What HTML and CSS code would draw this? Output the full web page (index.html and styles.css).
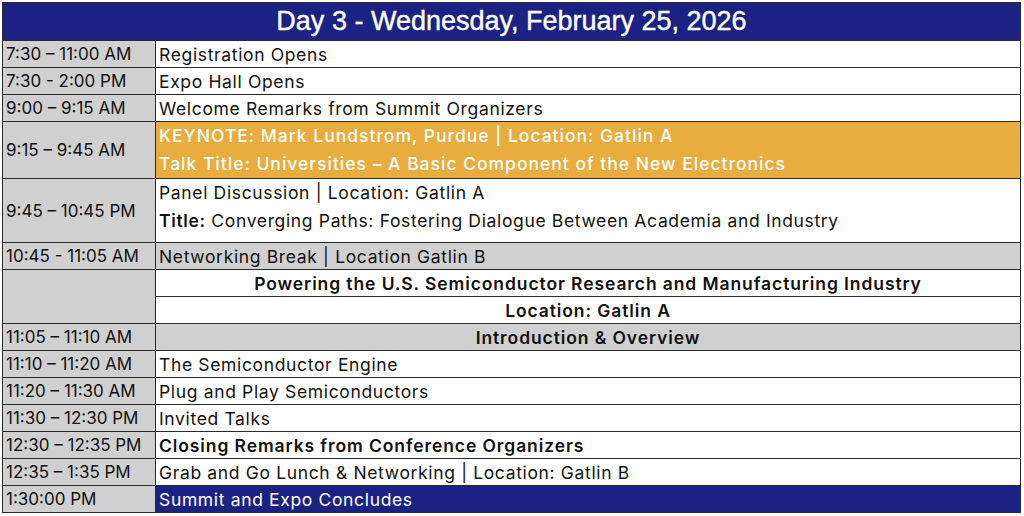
FILE: index.html
```html
<!DOCTYPE html>
<html lang="en">
<head>
<meta charset="utf-8">
<title>Day 3 Schedule</title>
<link rel="stylesheet" href="styles.css">
</head>
<body>
<div class="schedule">
  <div class="cell head">Day 3 - Wednesday, February 25, 2026</div>

  <div class="cell time">7:30 – 11:00 AM</div>
  <div class="cell event">Registration Opens</div>

  <div class="cell time">7:30 - 2:00 PM</div>
  <div class="cell event">Expo Hall Opens</div>

  <div class="cell time">9:00 – 9:15 AM</div>
  <div class="cell event">Welcome Remarks from Summit Organizers</div>

  <div class="cell time">9:15 – 9:45 AM</div>
  <div class="cell event keynote">
    <div class="line">KEYNOTE: Mark Lundstrom, Purdue | Location: Gatlin A</div>
    <div class="line">Talk Title: Universities – A Basic Component of the New Electronics</div>
  </div>

  <div class="cell time">9:45 – 10:45 PM</div>
  <div class="cell event panel">
    <div class="line">Panel Discussion | Location: Gatlin A</div>
    <div class="line"><b>Title:</b> Converging Paths: Fostering Dialogue Between Academia and Industry</div>
  </div>

  <div class="cell time">10:45 - 11:05 AM</div>
  <div class="cell event gray">Networking Break | Location Gatlin B</div>

  <div class="cell time span2"></div>
  <div class="cell event center bold">Powering the U.S. Semiconductor Research and Manufacturing Industry</div>
  <div class="cell event center bold">Location: Gatlin A</div>

  <div class="cell time">11:05 – 11:10 AM</div>
  <div class="cell event gray center bold">Introduction &amp; Overview</div>

  <div class="cell time">11:10 – 11:20 AM</div>
  <div class="cell event">The Semiconductor Engine</div>

  <div class="cell time">11:20 – 11:30 AM</div>
  <div class="cell event">Plug and Play Semiconductors</div>

  <div class="cell time">11:30 – 12:30 PM</div>
  <div class="cell event">Invited Talks</div>

  <div class="cell time">12:30 – 12:35 PM</div>
  <div class="cell event bold">Closing Remarks from Conference Organizers</div>

  <div class="cell time">12:35 – 1:35 PM</div>
  <div class="cell event">Grab and Go Lunch &amp; Networking | Location: Gatlin B</div>

  <div class="cell time">1:30:00 PM</div>
  <div class="cell event navy">Summit and Expo Concludes</div>
</div>
</body>
</html>
```

FILE: styles.css
```css
html, body {
  margin: 0;
  padding: 0;
  background: #ffffff;
}

body {
  font-family: "Inter", "Liberation Sans", sans-serif;
  color: #111111;
}

.schedule {
  margin: 2px 0 0 2px;
  width: 1019px;
  box-sizing: border-box;
  display: grid;
  grid-template-columns: 152px 1fr;
  grid-template-rows: 37px 26px 26px 26px 56px 63px 26px 26px 26px 26px 26px 26px 26px 26px 26px 26px;
  gap: 1px;
  background: #2a2a2a;
  border: 1px solid #2a2a2a;
}

.cell {
  background: #ffffff;
  font-size: 17px;
  display: flex;
  align-items: center;
  padding: 0 3px;
  white-space: nowrap;
  overflow: hidden;
}

.event {
  font-size: 17.5px;
  letter-spacing: 0.65px;
}

.head {
  grid-column: 1 / -1;
  background: #1b2283;
  color: #ffffff;
  font-family: "Liberation Sans", Arial, sans-serif;
  font-size: 27px;
  font-weight: 400;
  -webkit-text-stroke: 0.4px #ffffff;
  justify-content: center;
}

.time {
  background: #d0d0d0;
}

.span2 {
  grid-row: span 2;
}

.event.gray {
  background: #d0d0d0;
}

.center {
  justify-content: center;
}

.bold {
  font-weight: 600;
  letter-spacing: 0.9px;
}

.keynote,
.panel {
  flex-direction: column;
  align-items: flex-start;
  justify-content: flex-start;
}

.keynote {
  background: #e8ac3f;
  color: #ffffff;
  font-weight: 500;
  letter-spacing: 1px;
}

.keynote .line {
  height: 28px;
  line-height: 28px;
}

.panel .line {
  height: 28px;
  line-height: 28px;
}

.panel b {
  font-weight: 600;
}

.navy {
  background: #1b2283;
  color: #ffffff;
}
```
